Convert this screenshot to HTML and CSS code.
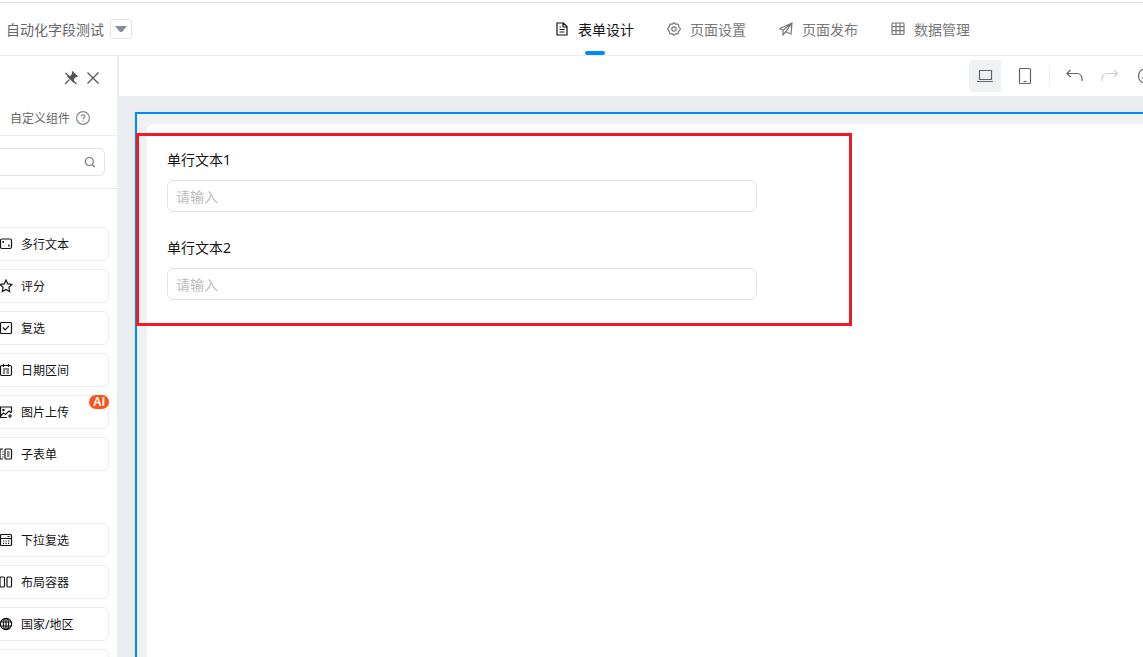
FILE: index.html
```html
<!DOCTYPE html>
<html lang="zh-CN">
  <head>
    <meta charset="UTF-8" />
    <meta name="viewport" content="width=device-width, initial-scale=1.0" />
    <title>自动化字段测试</title>
    <link rel="stylesheet" href="styles.css" />
  </head>
  <body>
    <header class="header">
      <div class="form-name">
        <span>自动化字段测试</span>
        <button type="button" class="name-toggle">
          <svg width="12" height="8" viewBox="0 0 12 8"><path d="M0 1h12L7 7H5z" fill="#868d96" /></svg>
        </button>
      </div>
      <nav class="tabs">
        <a href="#design" class="tab active">
          <svg class="icon" viewBox="0 0 14 14"><path d="M2 1h6.500L12 4.500V13H2zM8 1v4h4M4.500 5H6M4.500 7.500h5M4.500 10h5" /></svg>
          <span>表单设计</span>
        </a>
        <a href="#settings" class="tab">
          <svg class="icon" viewBox="0 0 14 14"><path d="M5.300 2.200 7 .7l1.700 1.500 2.400-.1.500 2.300L13.500 7l-1.900 2.600-.5 2.300-2.400-.1L7 13.300l-1.700-1.500-2.400.1-.5-2.300L.5 7l1.900-2.600.5-2.300z" stroke-linejoin="round" /><circle cx="7" cy="7" r="2.200" /></svg>
          <span>页面设置</span>
        </a>
        <a href="#publish" class="tab">
          <svg class="icon" viewBox="0 0 14 14"><path d="M13 1 .8 6.500 4 8.300V13l2.600-3.200L12 12zM13 1 4 8.300M13 1 6.600 9.800" /></svg>
          <span>页面发布</span>
        </a>
        <a href="#data" class="tab">
          <svg class="icon" viewBox="0 0 14 14"><rect x="1" y="1" width="12" height="11.500" rx="1" /><path d="M1 4.700h12M1 8.600h12M5 1v11.500M9 1v11.500" /></svg>
          <span>数据管理</span>
        </a>
      </nav>
    </header>

    <div class="workspace">
      <aside class="sidebar">
        <div class="panel-actions">
          <button type="button">
            <svg class="icon" viewBox="0 0 14 14"><path d="M8.500 1 13 5.200l-1.500.4-2 2-.3 3L4 5.500l3-.5 1.600-2.200z" fill="currentColor" /><path d="M1 13l4.500-4.500M1.500 2l11 11" /></svg>
          </button>
          <button type="button">
            <svg class="icon" viewBox="0 0 14 14"><path d="M1.500 1.500l11 11M12.500 1.500l-11 11" /></svg>
          </button>
        </div>
        <div class="panel-tab">
          <a href="#custom">自定义组件</a>
          <svg class="icon" viewBox="0 0 14 14"><circle cx="7" cy="7" r="6.400" /><path d="M5.300 5.600c0-2.400 3.500-2.200 3.500-.1C8.800 6.800 7 6.800 7 8.200M7 9.500v1" /></svg>
        </div>
        <div class="search">
          <input type="search" aria-label="搜索" />
          <svg class="icon" viewBox="0 0 14 14"><circle cx="6.300" cy="6.500" r="4" /><path d="M9.300 9.500l2.500 2.500" /></svg>
        </div>

        <div class="group">
          <button type="button" class="item">
            <svg class="icon" viewBox="0 0 14 14"><rect x="1.500" y="2" width="11" height="9.500" rx="1.500" /><path d="M4 6V4.500h1M10 7.500V9H9" /></svg>
            <span>多行文本</span>
          </button>
          <button type="button" class="item">
            <svg class="icon" viewBox="0 0 14 14"><path d="M7 1l1.800 3.900 4.200.5-3.100 2.900.8 4.200L7 10.400l-3.700 2.100.8-4.200L1 5.400l4.200-.5z" /></svg>
            <span>评分</span>
          </button>
          <button type="button" class="item">
            <svg class="icon" viewBox="0 0 14 14"><rect x="1.500" y="1.500" width="11" height="11" rx="1" /><path d="M4 6.500l2.200 2.300L10 4.800" /></svg>
            <span>复选</span>
          </button>
          <button type="button" class="item">
            <svg class="icon" viewBox="0 0 14 14"><rect x="1.500" y="2.500" width="11" height="10" rx="1.500" /><path d="M4.500 1v3M9.500 1v3M4 6h6M4 8h2M7.500 8H10M4 10h2M7.500 10H10" /></svg>
            <span>日期区间</span>
          </button>
          <button type="button" class="item">
            <svg class="icon" viewBox="0 0 14 14"><path d="M12.500 7V2h-11v10.500H8M1.500 11l3-3 2 1.500L10 6l2.500 2M11 9v4M9 11h4" /><circle cx="4.500" cy="5" r=".6" /></svg>
            <span>图片上传</span>
            <span class="badge">AI</span>
          </button>
          <button type="button" class="item">
            <svg class="icon" viewBox="0 0 14 14"><rect x="6" y="2" width="6.500" height="10" rx="1" /><path d="M4 2H1v10h3M4 4.500v1M4 7v1M4 9.500v1M8 5h2.500M8 7h2.500M8 9h2.500" /></svg>
            <span>子表单</span>
          </button>
        </div>

        <div class="group">
          <button type="button" class="item">
            <svg class="icon" viewBox="0 0 14 14"><rect x="1.500" y="1.500" width="11" height="11" rx="1" /><path d="M1.500 5.500h11M8.500 3.500h2M4 8h1.200M6.500 8h1.200M9 8h1.200M4 10.300h1.200M6.500 10.300h1.200M9 10.300h1.200" /></svg>
            <span>下拉复选</span>
          </button>
          <button type="button" class="item">
            <svg class="icon" viewBox="0 0 14 14"><rect x="1" y="2" width="4.500" height="10" rx="1" /><rect x="8" y="2" width="4.500" height="10" rx="1" /></svg>
            <span>布局容器</span>
          </button>
          <button type="button" class="item">
            <svg class="icon" viewBox="0 0 14 14"><circle cx="7" cy="7" r="5.600" /><ellipse cx="7" cy="7" rx="2.600" ry="5.600" /><path d="M1.500 5h11M1.500 9h11M7 1.500v11" /></svg>
            <span>国家/地区</span>
          </button>
          <button type="button" class="item"></button>
        </div>
      </aside>

      <main class="editor">
        <div class="toolbar">
          <div class="tool-group devices">
            <button type="button" class="tool selected">
              <svg width="18" height="18" viewBox="0 0 18 18"><path d="M3.500 3.500h12v9h-12zM1 14.500h16" /></svg>
            </button>
            <button type="button" class="tool">
              <svg width="18" height="18" viewBox="0 0 18 18"><rect x="3.500" y="1.500" width="11" height="15" rx="1" /><path d="M7.500 14.500h3" /></svg>
            </button>
          </div>
          <span class="divider"></span>
          <div class="tool-group">
            <button type="button" class="tool">
              <svg width="18" height="18" viewBox="0 0 18 18"><path d="M5.500 3 2 6.500 5.500 10M2 6.500h10q5 0 5 6V14" /></svg>
            </button>
            <button type="button" class="tool" disabled>
              <svg width="18" height="18" viewBox="0 0 18 18"><path d="M13 3l3.500 3.500L13 10M16.500 6.500H6q-5 0-5 6V14" /></svg>
            </button>
            <button type="button" class="tool">
              <svg width="18" height="18" viewBox="0 0 18 18"><circle cx="9" cy="9" r="7.500" /><path d="M5 10.500l3 2.500 5-6" /></svg>
            </button>
          </div>
        </div>

        <div class="canvas">
          <div class="frame">
            <form class="form">
              <div class="field">
                <label for="text1">单行文本1</label>
                <input type="text" id="text1" placeholder="请输入" />
              </div>
              <div class="field">
                <label for="text2">单行文本2</label>
                <input type="text" id="text2" placeholder="请输入" />
              </div>
              <div class="highlight"></div>
            </form>
          </div>
        </div>
      </main>
    </div>
  </body>
</html>
```

FILE: styles.css
```css
* {
  box-sizing: border-box;
}
body {
  margin: 0;
  padding-top: 2px;
  height: 100vh;
  display: flex;
  flex-direction: column;
  overflow: hidden;
  background-color: #fff;
  color: #141414;
  font-family: "Noto Sans", "Noto Sans CJK SC", sans-serif;
  font-size: 14px;
  line-height: 20px;
}
button,
input {
  font: inherit;
  color: inherit;
}
button {
  padding: 0;
  border: none;
  background: none;
  cursor: pointer;
}
a {
  color: inherit;
  text-decoration: none;
}
svg {
  display: block;
  flex: none;
  fill: none;
  stroke: currentColor;
  stroke-width: 1.2;
}
.icon {
  width: 14px;
  height: 14px;
}

/* header */
.header {
  display: flex;
  justify-content: space-between;
  flex: none;
  height: 54px;
  padding: 0 173px 0 6px;
  border-top: 1px solid #dfe0e2;
  border-bottom: 1px solid #ebecee;
}
.form-name {
  display: flex;
  align-items: center;
  gap: 6px;
  color: #666;
}
.name-toggle {
  display: flex;
  align-items: center;
  justify-content: center;
  width: 22px;
  height: 20px;
  border: 1px solid #e3e4e6;
  border-radius: 3px;
}
.name-toggle svg {
  stroke: none;
}
.form-name span,
.tab span,
.panel-tab a,
.item span {
  padding-top: 2px;
}
.tabs {
  display: flex;
  gap: 33px;
}
.tab {
  position: relative;
  display: flex;
  align-items: center;
  gap: 9px;
  color: #777;
}
.tab.active {
  color: #141414;
}
.tab.active::after {
  content: "";
  position: absolute;
  left: 50%;
  bottom: 0;
  width: 20px;
  height: 4px;
  margin-left: -10px;
  border-radius: 2px;
  background-color: #0089ff;
}

/* sidebar */
.workspace {
  display: flex;
  flex: 1;
  min-height: 0;
  background-color: #ecedf1;
}
.sidebar {
  flex: none;
  width: 117px;
  margin-right: 2px;
  overflow: hidden;
  background-color: #fff;
  font-size: 12px;
}
.panel-actions {
  display: flex;
  align-items: center;
  justify-content: flex-end;
  gap: 8px;
  height: 44px;
  padding-right: 17px;
  color: #555;
}
.panel-tab {
  display: flex;
  align-items: center;
  gap: 6px;
  height: 36px;
  padding-left: 10px;
  border-bottom: 1px solid #ebecee;
  color: #666;
}
.panel-tab .icon {
  color: #888;
}
.search {
  position: relative;
  padding: 12px 12px 12px 0;
  border-bottom: 1px solid #ebecee;
}
.search input {
  display: block;
  width: 100%;
  height: 28px;
  border: 1px solid #e3e4e6;
  border-left: none;
  border-radius: 0 6px 6px 0;
}
.search .icon {
  position: absolute;
  top: 19px;
  right: 20px;
  color: #777;
}
.group {
  display: flex;
  flex-direction: column;
  gap: 8px;
  margin: 38px 8px 52px -20px;
}
.group + .group {
  margin-top: 0;
}
.item {
  position: relative;
  display: flex;
  align-items: center;
  gap: 8px;
  height: 34px;
  padding-left: 18px;
  border: 1px solid #ebecee;
  border-radius: 6px;
}
.item .badge {
  position: absolute;
  top: -1px;
  right: -1px;
  width: 20px;
  height: 14px;
  padding: 0;
  border-radius: 7px;
  background-color: #ff5219;
  color: #fff;
  font-family: "Liberation Sans", sans-serif;
  font-weight: bold;
  line-height: 15px;
}

/* editor */
.editor {
  display: flex;
  flex: 1;
  flex-direction: column;
  min-width: 0;
  overflow: hidden;
}
.toolbar {
  display: flex;
  align-items: center;
  justify-content: flex-end;
  gap: 8px;
  flex: none;
  height: 40px;
  margin-right: -19px;
  background-color: #fff;
  color: #666;
}
.tool-group {
  display: flex;
  gap: 4px;
}
.devices {
  gap: 8px;
}
.tool {
  display: flex;
  align-items: center;
  justify-content: center;
  width: 32px;
  height: 32px;
  border-radius: 3px;
}
.tool.selected {
  background-color: #f0f1f3;
}
.tool:disabled {
  color: #ccc;
}
.divider {
  width: 1px;
  height: 20px;
  background-color: #ebecee;
}
.canvas {
  display: flex;
  flex: 1;
  padding: 16px 0 0 16px;
}
.frame {
  display: flex;
  flex: 1;
  padding: 10px 0 0 10px;
  border: solid #0089ff;
  border-width: 2px 0 0 2px;
  background-color: #f0f1f3;
  box-shadow: 0 0 8px rgba(0, 0, 0, 0.04);
}
.form {
  position: relative;
  flex: 1;
  padding: 26px 20px;
  border-radius: 6px 0 0 0;
  background-color: #fff;
}
.field {
  display: flex;
  flex-direction: column;
  gap: 10px;
  max-width: 590px;
  margin-bottom: 26px;
}
.field input {
  height: 32px;
  padding: 0 8px;
  border: 1px solid #e3e4e6;
  border-radius: 6px;
}
.field input::placeholder {
  color: #bbb;
}
.highlight {
  position: absolute;
  top: 9px;
  left: -11px;
  width: 716px;
  height: 193px;
  border: 3px solid #ee1c25;
  pointer-events: none;
}
```
